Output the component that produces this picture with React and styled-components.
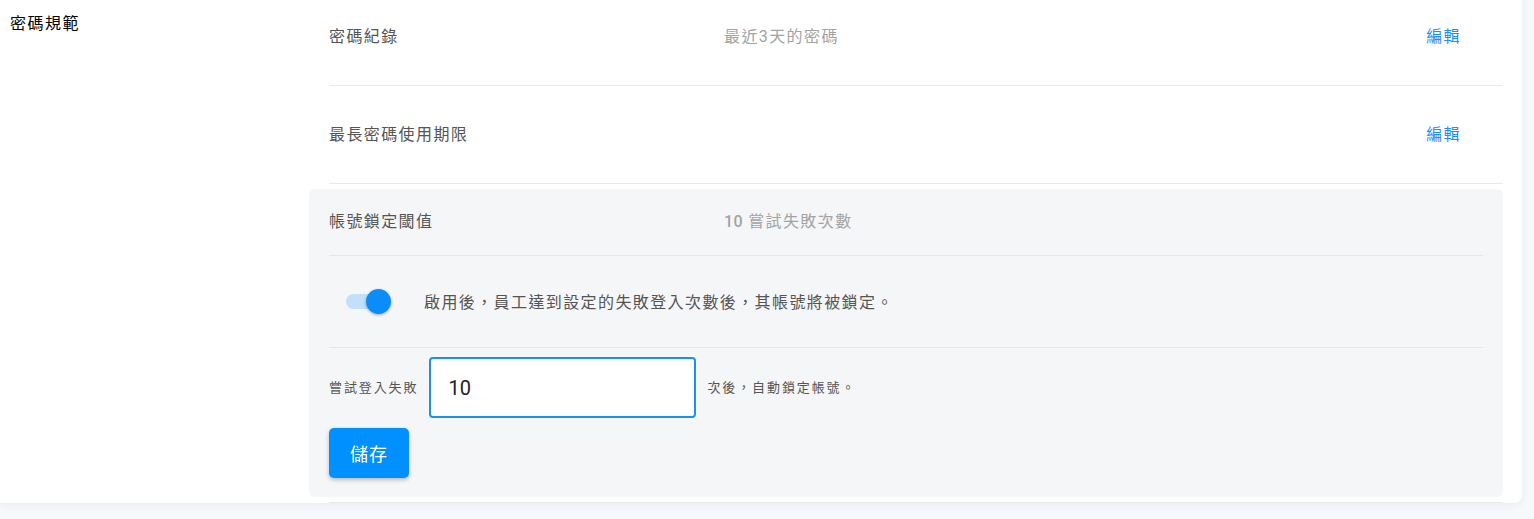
import styled, { createGlobalStyle } from "styled-components";
import { useState } from "react";

const Global = createGlobalStyle`
    html, body {
        margin: 0;
        padding: 0;
        background: #f7f8fc;
        font-family: "Roboto", "Noto Sans CJK TC", sans-serif;
    }
`;

const rows = [
    { id: "history", label: "密碼紀錄", value: "最近3天的密碼" },
    { id: "maxAge", label: "最長密碼使用期限", value: "" },
];

const App = () => {
    const [enabled, setEnabled] = useState(true);
    const [tries, setTries] = useState("10");

    return (
        <Page>
            <Global />
            <Card>
                <SideLabel>密碼規範</SideLabel>
                <List>
                    {rows.map((r) => (
                        <Row key={r.id}>
                            <RowLabel>{r.label}</RowLabel>
                            <RowValue>{r.value}</RowValue>
                            <EditLink href="#">編輯</EditLink>
                        </Row>
                    ))}
                    <Row open>
                        <Panel>
                            <PanelHead>
                                <RowLabel>帳號鎖定閾值</RowLabel>
                                <RowValue>
                                    <b>{tries}</b> 嘗試失敗次數
                                </RowValue>
                            </PanelHead>
                            <SwitchLine>
                                <Switch on={enabled} onClick={() => setEnabled(!enabled)}>
                                    <span className="track" />
                                    <span className="thumb" />
                                </Switch>
                                <Hint>啟用後，員工達到設定的失敗登入次數後，其帳號將被鎖定。</Hint>
                            </SwitchLine>
                            <InputLine>
                                <Small>嘗試登入失敗</Small>
                                <Input value={tries} onChange={(e) => setTries(e.target.value)} />
                                <Small>次後，自動鎖定帳號。</Small>
                            </InputLine>
                            <SaveButton>儲存</SaveButton>
                        </Panel>
                    </Row>
                </List>
            </Card>
        </Page>
    );
};

export default App;

const Page = styled.div`
    height: 519px;
    overflow: hidden;
`;

const Card = styled.div`
    display: flex;
    width: 1522px;
    margin-top: -12px;
    background: #fff;
    border-radius: 0 0 8px 0;
    box-shadow: 0 2px 8px rgba(40, 50, 90, 0.06);
`;

const SideLabel = styled.div`
    width: 299px;
    flex-shrink: 0;
    padding: 25px 0 0 10px;
    font-size: 16px;
    letter-spacing: 1.5px;
    color: #000;
    line-height: 22px;
`;

const List = styled.div`
    flex: 1;
    padding-right: 19px;
    display: flex;
    flex-direction: column;
`;

const Row = styled.div`
    box-sizing: border-box;
    margin-left: 20px;
    border-bottom: 1px solid #e9e9e9;
    display: flex;
    align-items: center;
    height: ${(p) => (p.open ? "auto" : "98px")};
    padding: ${(p) => (p.open ? "5px 0" : "0 0 4px")};
`;

const RowLabel = styled.div`
    width: 395px;
    flex-shrink: 0;
    font-size: 16px;
    letter-spacing: 1.4px;
    color: #555;
`;

const RowValue = styled.div`
    flex: 1;
    font-size: 16px;
    letter-spacing: 1.4px;
    color: #a3a3a3;
    > b {
        font-weight: 500;
        letter-spacing: 0.3px;
    }
`;

const EditLink = styled.a`
    font-size: 16px;
    letter-spacing: 1.4px;
    color: #1890ff;
    text-decoration: none;
    margin-right: 42px;
`;

const Panel = styled.div`
    flex: 1;
    margin-left: -20px;
    background: #f5f6f8;
    border-radius: 6px;
    padding: 0 20px 19px;
`;

const PanelHead = styled.div`
    box-sizing: border-box;
    display: flex;
    align-items: center;
    height: 67px;
    padding-bottom: 4px;
    border-bottom: 1px solid #e6e7ea;
`;

const SwitchLine = styled.div`
    box-sizing: border-box;
    display: flex;
    align-items: center;
    height: 92px;
    padding-bottom: 2px;
    border-bottom: 1px solid #e6e7ea;
`;

const Switch = styled.div`
    position: relative;
    width: 46px;
    height: 24px;
    margin-left: 17px;
    margin-right: 32px;
    cursor: pointer;
    > .track {
        position: absolute;
        left: 0;
        top: 5px;
        width: 44px;
        height: 15px;
        border-radius: 8px;
        background: ${(p) => (p.on ? "#c2e0fc" : "#ccc")};
    }
    > .thumb {
        position: absolute;
        top: 0;
        left: ${(p) => (p.on ? "20px" : "0")};
        width: 25px;
        height: 25px;
        border-radius: 50%;
        background: ${(p) => (p.on ? "#0b8df9" : "#f0f0f0")};
        box-shadow: 0 1px 3px rgba(0, 0, 0, 0.35);
    }
`;

const Hint = styled.div`
    font-size: 16px;
    color: #555;
    letter-spacing: 1.4px;
`;

const InputLine = styled.div`
    display: flex;
    align-items: center;
    gap: 11px;
    padding-top: 9px;
`;

const Small = styled.span`
    font-size: 13px;
    letter-spacing: 1.9px;
    color: #555;
    padding-bottom: 2px;
`;

const Input = styled.input`
    box-sizing: border-box;
    width: 267px;
    height: 61px;
    border: 2px solid #1a8ff5;
    border-radius: 4px;
    background: #fff;
    padding: 0 17px;
    font-family: "Roboto", sans-serif;
    font-size: 20px;
    color: #222;
    outline: none;
`;

const SaveButton = styled.button`
    display: block;
    margin-top: 10px;
    width: 80px;
    height: 50px;
    padding-bottom: 2px;
    border: none;
    border-radius: 5px;
    background: #0090ff;
    color: #fff;
    font-family: "Roboto", "Noto Sans CJK TC", sans-serif;
    font-size: 18px;
    letter-spacing: 1px;
    box-shadow: 0 2px 4px rgba(0, 0, 0, 0.25);
    cursor: pointer;
`;
